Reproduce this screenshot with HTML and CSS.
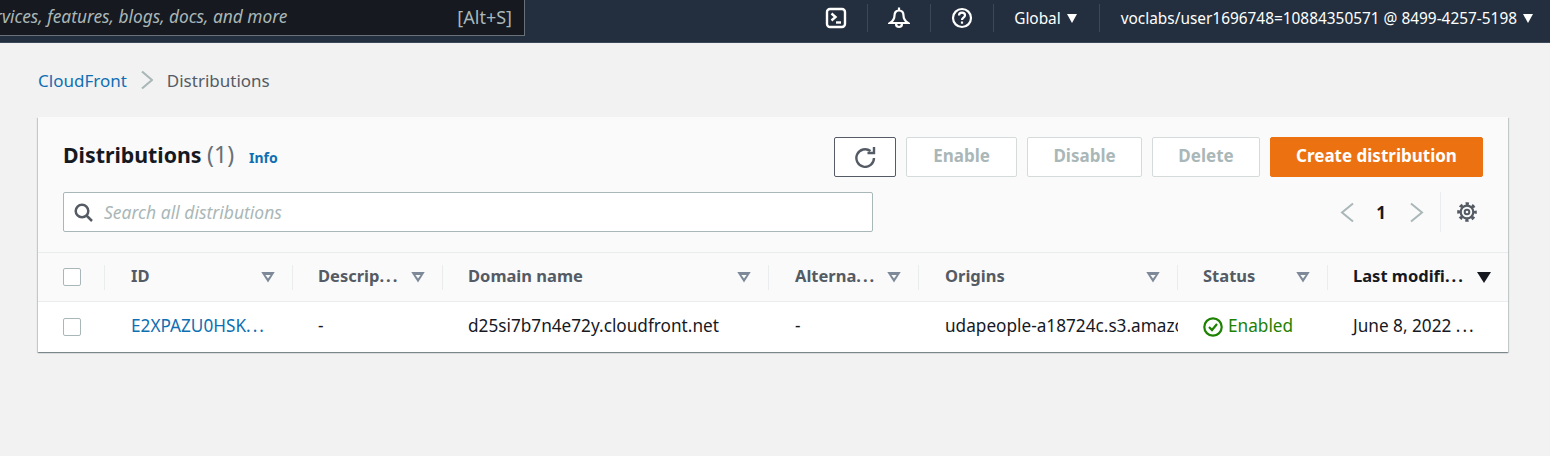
FILE: index.html
```html
<!DOCTYPE html>
<html lang="en">
<head>
    <meta charset="UTF-8">
    <meta name="viewport" content="width=device-width, initial-scale=1.0">
    <title>Distributions | CloudFront</title>
    <link rel="stylesheet" href="styles.css">
</head>
<body>
    <header class="topbar">
        <div class="global-search">
            <span class="global-search-text">Search for services, features, blogs, docs, and more</span>
            <span class="global-search-key">[Alt+S]</span>
        </div>
        <nav class="topnav">
            <div class="topnav-item icon-item">
                <svg width="22" height="22" viewBox="0 0 22 22" fill="none" stroke="#fff" stroke-width="2.4"><rect x="2" y="2" width="18" height="18" rx="3"/><path d="M6.500 6.500l4 3.500-4 3.500"/><path d="M11 15.500h5"/></svg>
            </div>
            <div class="topnav-item icon-item">
                <svg width="22" height="22" viewBox="0 0 22 22" fill="none" stroke="#fff" stroke-width="2.2"><path d="M11 0.500v3"/><path d="M11 3.500c-3 0-4.500 2.200-4.500 5 0 3.500-1.500 5.500-4.500 7.500h18c-3-2-4.500-4-4.500-7.500 0-2.800-1.500-5-4.500-5z"/><path d="M8 16.500c0 2 1.300 3.500 3 3.500s3-1.500 3-3.500"/></svg>
            </div>
            <div class="topnav-item icon-item">
                <svg width="22" height="22" viewBox="0 0 22 22" fill="none" stroke="#fff" stroke-width="2.2"><circle cx="11" cy="11" r="9"/><path d="M8 8.500c0-1.700 1.300-2.800 3-2.800s3 1.100 3 2.600c0 2.400-3 2.400-3 4.700"/><path d="M11 14.500v2.200"/></svg>
            </div>
            <div class="topnav-item text-item">Global <span class="caret"></span></div>
            <div class="topnav-item text-item last">voclabs/user1696748=10884350571 @ 8499-4257-5198 <span class="caret"></span></div>
        </nav>
    </header>

    <main class="content">
        <div class="breadcrumb">
            <a href="#" class="link">CloudFront</a>
            <svg width="12" height="20" viewBox="0 0 12 20" fill="none" stroke="#aab7b8" stroke-width="2.2"><path d="M1 1.500L11 10 1 18.500"/></svg>
            <span>Distributions</span>
        </div>

        <section class="card">
            <div class="card-head">
                <div class="title-row">
                    <h1>Distributions <span class="count">(1)</span></h1>
                    <a href="#" class="info">Info</a>
                    <div class="actions">
                        <button class="btn btn-refresh">
                            <svg width="22" height="22" viewBox="0 0 22 22" fill="none" stroke="#545b64" stroke-width="2.4"><path d="M16.500 5A8.800 8.800 0 1 0 20 12"/><path d="M20 1v6h-6.500" stroke-linejoin="miter"/></svg>
                        </button>
                        <button class="btn btn-enable" disabled>Enable</button>
                        <button class="btn btn-disable" disabled>Disable</button>
                        <button class="btn btn-delete" disabled>Delete</button>
                        <button class="btn btn-primary">Create distribution</button>
                    </div>
                </div>
                <div class="filter-row">
                    <div class="search">
                        <svg width="19" height="19" viewBox="0 0 19 19" fill="none" stroke="#545b64" stroke-width="2.500"><circle cx="8" cy="8" r="6.300"/><path d="M12.500 12.500l5.500 5.500"/></svg>
                        <input type="text" placeholder="Search all distributions">
                    </div>
                    <div class="pager">
                        <svg width="16" height="21" viewBox="0 0 16 21" fill="none" stroke="#aab7b8" stroke-width="2"><path d="M14 1.500L3 10.500l11 9"/></svg>
                        <span class="page-num">1</span>
                        <svg width="16" height="21" viewBox="0 0 16 21" fill="none" stroke="#aab7b8" stroke-width="2"><path d="M2 1.500l11 9-11 9"/></svg>
                    </div>
                    <div class="prefs">
                        <svg width="20" height="20" viewBox="0 0 20 20" fill="none" stroke="#545b64"><circle cx="10" cy="10" r="6.300" stroke-width="2.200"/><circle cx="10" cy="10" r="2.300" stroke-width="2"/><circle cx="10" cy="10" r="8.300" stroke-width="3" stroke-dasharray="3.300 3.220" stroke-dashoffset="1.650"/></svg>
                    </div>
                </div>
            </div>

            <div class="table">
                <div class="row row-head">
                    <div class="cell cell-check"><span class="checkbox"></span></div>
                    <div class="cell"><span class="col-label">ID</span><span class="sort"></span></div>
                    <div class="cell"><span class="col-label">Descrip<span class="dots">...</span></span><span class="sort"></span></div>
                    <div class="cell"><span class="col-label">Domain name</span><span class="sort"></span></div>
                    <div class="cell"><span class="col-label">Alterna<span class="dots">...</span></span><span class="sort"></span></div>
                    <div class="cell"><span class="col-label">Origins</span><span class="sort"></span></div>
                    <div class="cell"><span class="col-label">Status</span><span class="sort"></span></div>
                    <div class="cell cell-active"><span class="col-label">Last modifi<span class="dots">...</span></span><span class="sort-active"></span></div>
                </div>
                <div class="row row-body">
                    <div class="cell cell-check"><span class="checkbox"></span></div>
                    <div class="cell"><a href="#" class="link">E2XPAZU0HSK<span class="dots">...</span></a></div>
                    <div class="cell">-</div>
                    <div class="cell">d25si7b7n4e72y.cloudfront.net</div>
                    <div class="cell">-</div>
                    <div class="cell cell-clip">udapeople-a18724c.s3.amazo</div>
                    <div class="cell status">
                        <svg width="20" height="20" viewBox="0 0 20 20" fill="none" stroke="#1d8102" stroke-width="2.200"><circle cx="10" cy="10" r="8.700"/><path d="M6 10l3 3 5-6"/></svg>
                        Enabled
                    </div>
                    <div class="cell">June 8, 2022 <span class="dots">...</span></div>
                </div>
            </div>
        </section>
    </main>
</body>
</html>
```

FILE: styles.css
```css
* {
    box-sizing: border-box;
}
body {
    margin: 0;
    height: 456px;
    overflow: hidden;
    background: #f2f2f2;
    color: #16191f;
    font-family: "Noto Sans", Arial, sans-serif;
    font-size: 17px;
}
.link {
    color: #0f6fb3;
    text-decoration: none;
}
.dots {
    letter-spacing: 2px;
}

/* top bar */
.topbar {
    display: flex;
    justify-content: space-between;
    height: 43px;
    background: #232f3e;
    border-bottom: 1px solid #3c4757;
    overflow: hidden;
}
.global-search {
    display: flex;
    flex: none;
    justify-content: flex-end;
    align-items: center;
    gap: 170px;
    width: 525px;
    height: 36px;
    padding: 0 12px 2px 0;
    background: #16191f;
    border: 1px solid #687078;
    border-width: 0 1px 1px 0;
    color: #aab7b8;
    font-size: 17.300px;
    white-space: nowrap;
}
.global-search-text {
    font-style: italic;
}
.global-search-key {
    font-size: 18px;
}
.topnav {
    display: flex;
    align-items: center;
    height: 36px;
    color: #fff;
    font-size: 15.400px;
}
.topnav-item {
    display: flex;
    align-items: center;
    height: 28px;
    border-right: 1px solid #3c4757;
}
.icon-item {
    justify-content: center;
    width: 63px;
}
.icon-item svg {
    margin-right: 1px;
}
.text-item {
    gap: 6px;
    padding: 0 22px 0 20px;
    white-space: nowrap;
}
.text-item.last {
    border-right: 0;
    padding: 0 17px 0 21px;
}
.caret {
    border-top: 9px solid #fff;
    border-left: 5.500px solid transparent;
    border-right: 5.500px solid transparent;
}

/* breadcrumb */
.content {
    padding: 0 42px 0 38px;
}
.breadcrumb {
    display: flex;
    align-items: center;
    gap: 14px;
    height: 74px;
    color: #545b64;
}

/* card */
.card {
    background: #fff;
    box-shadow: 0 1px 1px 0 rgba(0, 28, 36, 0.3), 1px 1px 1px 0 rgba(0, 28, 36, 0.15), -1px 1px 1px 0 rgba(0, 28, 36, 0.15);
}
.card-head {
    height: 136px;
    padding: 20px 25px 0;
    background: #fafafa;
    border-bottom: 1px solid #eaeded;
}
.title-row {
    display: flex;
    align-items: center;
    height: 40px;
}
h1 {
    margin: 0 0 6px;
    font-size: 21.300px;
    font-weight: 700;
}
.count {
    color: #687078;
    font-size: 23px;
    font-weight: 400;
}
.info {
    margin-left: 15px;
    color: #0f6fb3;
    font-size: 14px;
    font-weight: 700;
    text-decoration: none;
}
.actions {
    display: flex;
    gap: 10px;
    margin-left: auto;
}
.btn {
    height: 40px;
    padding: 0 0 3px;
    background: #fff;
    border: 1px solid #d5dbdb;
    border-radius: 2px;
    color: #aab7b8;
    font-family: inherit;
    font-size: 17px;
    font-weight: 700;
}
.btn-refresh {
    display: flex;
    align-items: center;
    justify-content: center;
    width: 62px;
    padding: 0;
    border-color: #545b64;
}
.btn-enable {
    width: 111px;
}
.btn-disable {
    width: 115px;
}
.btn-delete {
    width: 108px;
}
.btn-primary {
    width: 213px;
    background: #ec7211;
    border-color: #ec7211;
    color: #fff;
}
.filter-row {
    display: flex;
    align-items: center;
    height: 40px;
    margin-top: 15px;
}
.search {
    display: flex;
    align-items: center;
    gap: 11px;
    width: 810px;
    height: 40px;
    padding-left: 10px;
    background: #fff;
    border: 1px solid #aab7b8;
    border-radius: 2px;
}
.search input {
    flex: 1;
    border: 0;
    outline: 0;
    padding: 0;
    background: transparent;
    font-family: inherit;
    font-size: 17.500px;
}
.search input::placeholder {
    color: #aab7b8;
    font-style: italic;
    opacity: 1;
}
.pager {
    display: flex;
    align-items: center;
    gap: 21px;
    margin-left: auto;
    padding-right: 15px;
}
.page-num {
    margin-right: 2px;
    font-weight: 700;
}
.prefs {
    display: flex;
    align-items: center;
    justify-content: flex-end;
    width: 43px;
    height: 40px;
    padding-right: 6px;
    border-left: 1px solid #eaeded;
}

/* table */
.row {
    display: grid;
    grid-template-columns: 67px 188px 150px 326px 150px 259px 150px 180px;
    align-items: center;
}
.row-head {
    height: 49px;
    background: #fafafa;
    border-bottom: 1px solid #eaeded;
    color: #545b64;
    font-size: 16.500px;
    font-weight: 700;
}
.row-body {
    height: 50px;
    font-size: 17.200px;
}
.row-head .cell {
    display: flex;
    align-items: center;
    justify-content: space-between;
    height: 25px;
    padding: 0 17px 0 25px;
    border-right: 1px solid #eaeded;
}
.row-body .cell {
    padding: 0 0 4px 25px;
    white-space: nowrap;
}
.row .cell:nth-child(2),
.row .cell:nth-child(5),
.row .cell:nth-child(6) {
    padding-left: 26px;
}
.col-label {
    margin-bottom: 4px;
}
.row .cell-check {
    display: flex;
    align-items: center;
    padding: 0 0 0 25px;
}
.row .cell-active {
    border-right: 0;
    color: #16191f;
}
.cell-clip {
    overflow: hidden;
}
.row .status {
    display: flex;
    align-items: center;
    gap: 5px;
    color: #1d8102;
}
.status svg {
    margin-top: 3px;
}
.checkbox {
    width: 18px;
    height: 18px;
    background: #fff;
    border: 1px solid #aab7b8;
    border-radius: 2px;
}
.sort {
    flex: none;
    width: 14px;
    height: 11px;
    background: #7d8998;
    clip-path: polygon(0 0, 100% 0, 50% 100%);
    position: relative;
}
.sort::after {
    content: "";
    position: absolute;
    top: 3px;
    left: 4px;
    width: 6px;
    height: 4px;
    background: #fafafa;
    clip-path: polygon(0 0, 100% 0, 50% 100%);
}
.sort-active {
    flex: none;
    border-top: 11px solid #16191f;
    border-left: 7px solid transparent;
    border-right: 7px solid transparent;
}
```
